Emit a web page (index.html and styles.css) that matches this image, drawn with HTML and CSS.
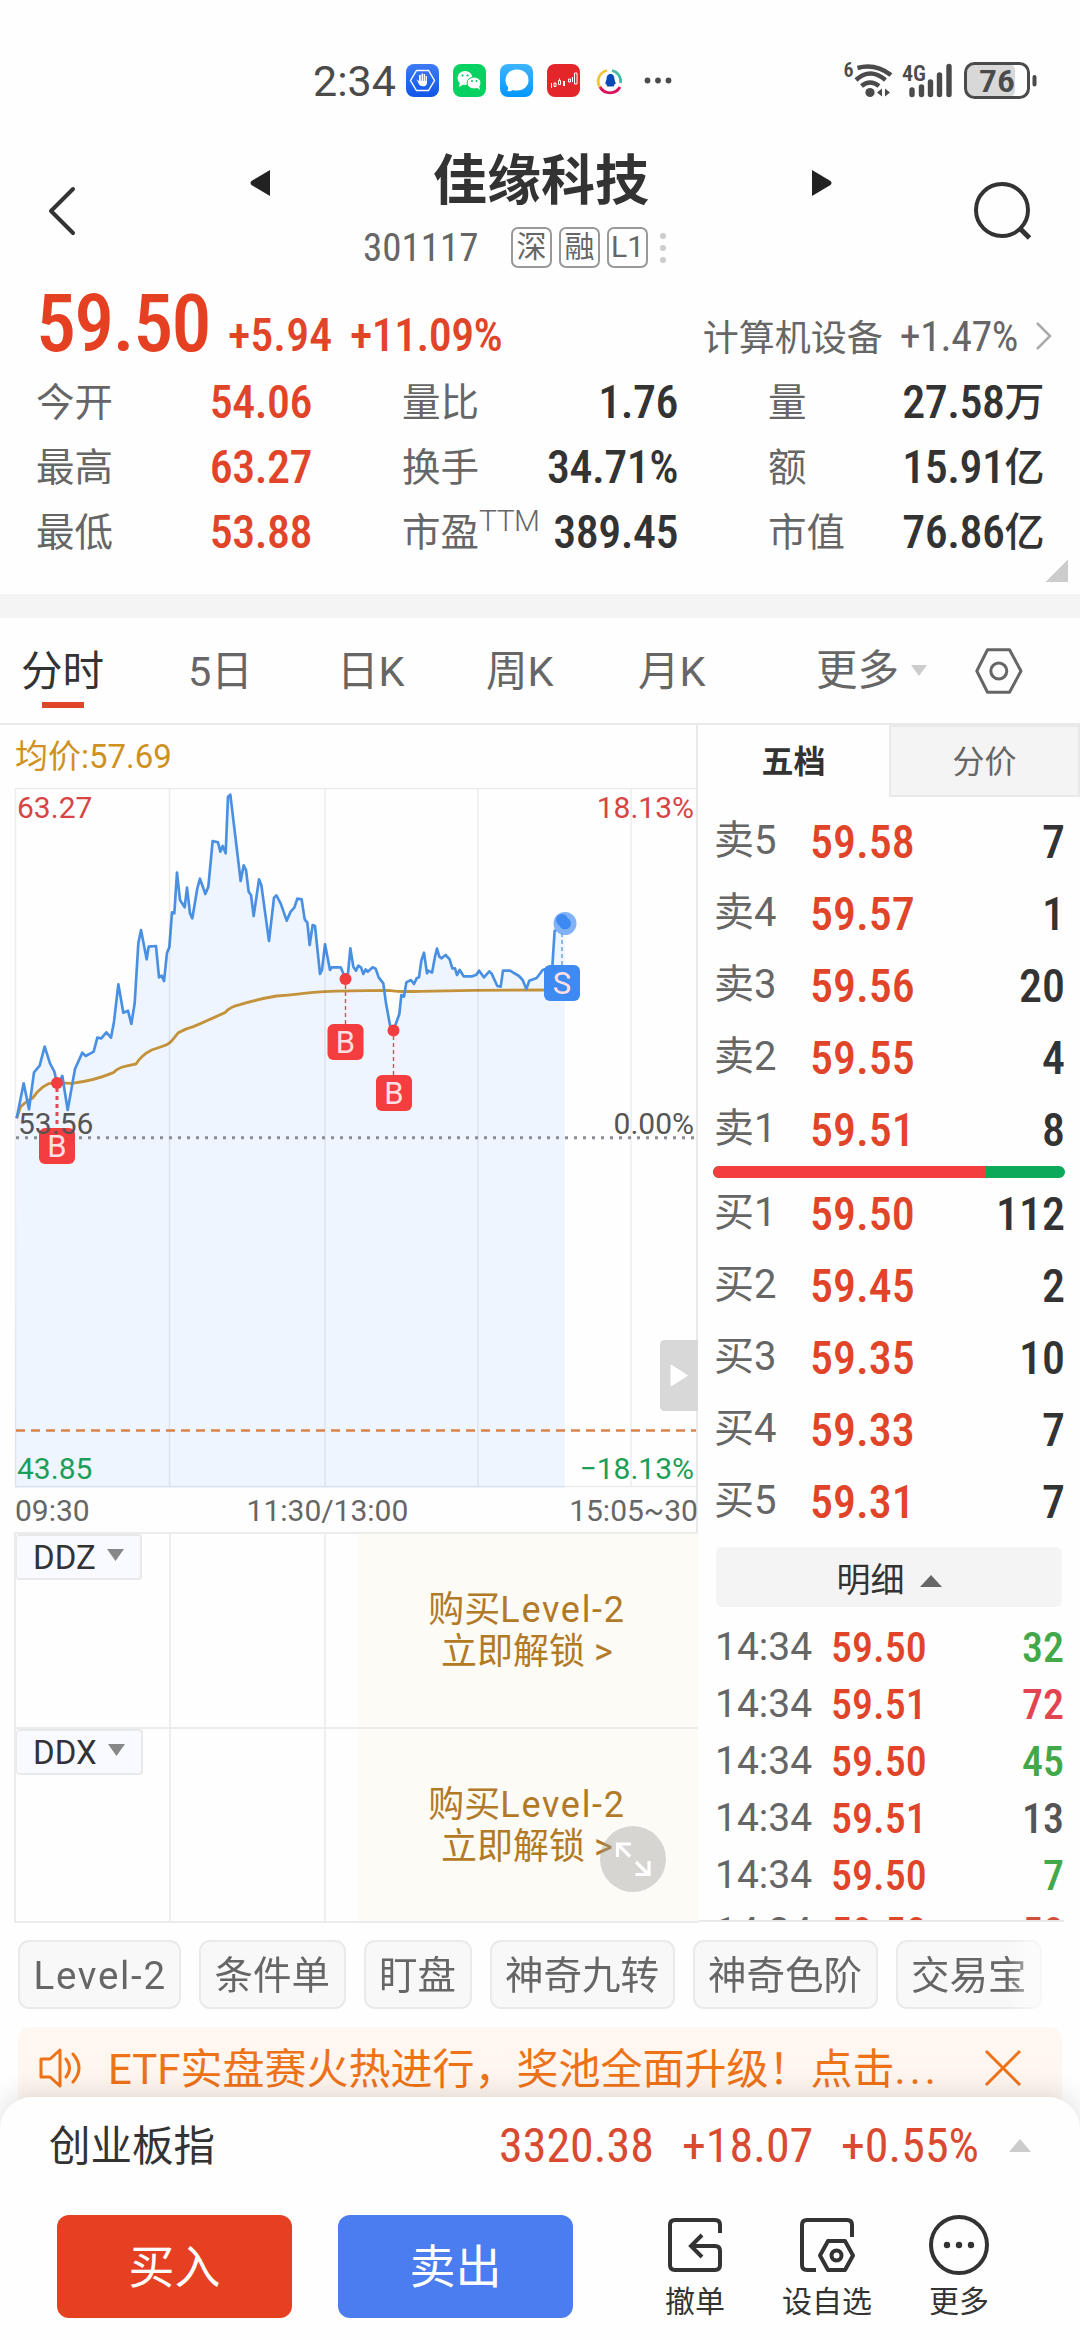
FILE: index.html
```html
<!DOCTYPE html>
<html lang="zh-CN">
<head>
<meta charset="utf-8">
<title>佳缘科技 301117</title>
<link rel="stylesheet" href="styles.css">
</head>
<body>
<div class="status">
  <span class="clock">2:34</span>
  <svg class="apps" width="270" height="40" viewBox="0 0 270 40">
    <defs>
      <linearGradient id="gBlue" x1="0" y1="0" x2="0" y2="1"><stop offset="0" stop-color="#3f7bf6"/><stop offset="1" stop-color="#0f55e8"/></linearGradient>
      <linearGradient id="gSky" x1="0" y1="0" x2="0" y2="1"><stop offset="0" stop-color="#3db5ff"/><stop offset="1" stop-color="#0497ff"/></linearGradient>
    </defs>
    <rect x="0" y="3" width="33" height="33" rx="8" fill="url(#gBlue)"/>
    <path d="M10.500 9.500h12l6 10-6 10h-12l-6-10z" fill="none" stroke="#fff" stroke-width="1.400"/>
    <path d="M13 14v6l-2.500-1.500 3 5.500q1.500 1.500 4.500 1.300 3-.3 3-4V15h-1.300v5h-.6v-7h-1.500v7h-.6v-7.500h-1.500V20h-.7v-6z" fill="#fff"/>
    <rect x="47" y="3" width="33" height="33" rx="8" fill="#07d160"/>
    <ellipse cx="59" cy="17" rx="7.500" ry="7" fill="#fff"/><path d="M54 21l-1 5 5-3z" fill="#fff"/>
    <ellipse cx="68" cy="22" rx="7" ry="6" fill="#fff" stroke="#07d160" stroke-width="1"/><path d="M70 26l4 3-1-5z" fill="#fff"/>
    <g fill="#07c160"><circle cx="56.500" cy="14.500" r="1.100"/><circle cx="61.500" cy="14.500" r="1.100"/><circle cx="66" cy="20" r="1"/><circle cx="70.500" cy="20" r="1"/></g>
    <rect x="94" y="3" width="33" height="33" rx="8" fill="url(#gSky)"/>
    <path d="M111 8.500c7 0 11.500 4.500 11.500 10.500S118 29.500 111 29.500c-1.500 0-3-.2-4-.6-2 1.300-4 1.400-6 1.100 1-1 1.500-2.500 1-4-1.700-1.800-2.500-4.300-2.500-7C99.500 13 104 8.500 111 8.500z" fill="#fff"/>
    <rect x="141" y="3" width="33" height="33" rx="8" fill="#e3262a"/>
    <g fill="none" stroke="#fff" stroke-width="1"><path d="M145.500 22v5M148 22h2v3.500h-2zM152.500 19.500h2v4h-2zM153.500 17.500v2M157.500 20v5M158.500 20v5M162.500 18h2v3h-2zM166.500 16v5M168.500 12h2.500v11h-2.500z"/></g>
    <g fill="none" stroke-width="2.800"><path d="M194.500 27A11 11 0 0 1 201 9.500" stroke="#f0c53a"/><path d="M206 9.500A11 11 0 0 1 214.500 22" stroke="#42bfa4"/><path d="M194 26A11.500 11.500 0 0 0 214 26" stroke="#d9145e"/></g>
    <path d="M204.500 13c3 0 4 2.500 4 5.500l1.300 4-1.300 1-.8 2h-6.400l-.8-2-1.300-1 1.300-4c0-3 1-5.500 4-5.500z" fill="#0a49b5"/>
    <g fill="#4b4b4b"><circle cx="241.500" cy="19.500" r="2.900"/><circle cx="252" cy="19.500" r="2.900"/><circle cx="262.500" cy="19.500" r="2.900"/></g>
  </svg>
  <svg class="signals" width="200" height="40" viewBox="842 61 200 40">
    <g fill="none" stroke="#4b4b4b" stroke-width="4.500">
      <path d="M856.500 68q17.500-5 33.500 7"/><path d="M855 80q14-13 29.500 0"/><path d="M860.500 86q8.500-7 17.500 0"/>
    </g>
    <circle cx="869" cy="92.500" r="4.600" fill="#4b4b4b"/>
    <path d="M881 88.500v8l-5-4zM884 88.500v8l5-4z" fill="#4b4b4b"/>
    <text x="842.500" y="77" font-size="20" class="mini">6</text>
    <text x="901" y="81" font-size="22" class="mini" textLength="24" lengthAdjust="spacingAndGlyphs">4G</text>
    <g stroke="#4b4b4b" stroke-width="5.400" stroke-linecap="round"><path d="M911 90v4.500M920.500 87v7.500M929.500 82v12.500M938.500 75v19.500M948 66.500v28"/></g>
    <rect x="965" y="64" width="49" height="33" rx="6" fill="#d8d8d8"/>
    <rect x="964.500" y="63.500" width="63" height="34" rx="9" fill="none" stroke="#4b4b4b" stroke-width="3"/>
    <path d="M1033.500 77v7.500" stroke="#4b4b4b" stroke-width="4" stroke-linecap="round"/>
    <text x="978" y="92" font-size="32" class="mini" textLength="36" lengthAdjust="spacingAndGlyphs">76</text>
  </svg>
</div>

<header class="titlebar">
  <svg class="back" width="30" height="52" viewBox="0 0 30 52"><path d="M26 4L4 26l22 22" fill="none" stroke="#333" stroke-width="4" stroke-linecap="round" stroke-linejoin="round"/></svg>
  <svg class="prev" width="24" height="30" viewBox="0 0 24 30"><path d="M22 2v26L3.500 17q-2-2 0-4z" fill="#222"/></svg>
  <div class="stock">
    <h1>佳缘科技</h1>
    <div class="code"><span class="num">301117</span><i>深</i><i>融</i><i>L1</i>
      <svg width="8" height="36" viewBox="0 0 8 36" fill="#ccc"><circle cx="4" cy="6" r="3"/><circle cx="4" cy="18" r="3"/><circle cx="4" cy="30" r="3"/></svg>
    </div>
  </div>
  <svg class="next" width="24" height="30" viewBox="0 0 24 30"><path d="M2 2v26l18.500-11q2-2 0-4z" fill="#222"/></svg>
  <svg class="search" width="64" height="64" viewBox="0 0 64 64"><circle cx="29" cy="30" r="26" fill="none" stroke="#333" stroke-width="4"/><path d="M46.500 48l10 10" stroke="#333" stroke-width="5"/></svg>
</header>

<section class="quote">
  <div class="headline">
    <span class="price num">59.50</span><span class="chg num">+5.94</span><span class="pct num">+11.09%</span>
    <span class="sector">计算机设备</span><span class="sectorpct num">+1.47%</span>
    <svg width="20" height="30" viewBox="0 0 20 30"><path d="M4 2l13 13L4 28" fill="none" stroke="#aaa" stroke-width="2.500"/></svg>
  </div>
  <div class="stats">
    <div><label>今开</label><b class="num up">54.06</b></div><div><label>量比</label><b class="num">1.76</b></div><div><label>量</label><b class="num">27.58<em>万</em></b></div>
    <div><label>最高</label><b class="num up">63.27</b></div><div><label>换手</label><b class="num">34.71%</b></div><div><label>额</label><b class="num">15.91<em>亿</em></b></div>
    <div><label>最低</label><b class="num up">53.88</b></div><div><label>市盈<sup>TTM</sup></label><b class="num">389.45</b></div><div><label>市值</label><b class="num">76.86<em>亿</em></b></div>
  </div>
  <span class="corner"></span>
</section>

<nav class="tabs">
  <span class="on">分时</span><span>5日</span><span>日K</span><span>周K</span><span>月K</span>
  <span class="more">更多<svg width="16" height="11" viewBox="0 0 16 11"><path d="M0 0h16L8 11z" fill="#ccc"/></svg></span>
  <svg width="48" height="46" viewBox="0 0 48 46" fill="none" stroke="#666" stroke-width="3" stroke-linejoin="round"><path d="M12.500 1.800h22L46 23 34.500 44.200h-22L1.800 23z"/><circle cx="23.800" cy="23" r="8"/></svg>
</nav>

<main class="market">
  <div class="left">
    <div class="avg">均价:57.69</div>
    <svg class="chart" width="698" height="700" viewBox="0 0 698 700">
      <g transform="translate(0 -18) scale(.33333)">
        <path class="area" d="M45 2166L50 1045L71 940L87 1018L102 907L119 887L134 830L150 880L163 905L172 945L187 918L203 1020L225 897L247 848L257 858L281 845L292 803L304 805L319 787L333 803L342 755L355 643L370 728L384 722L394 762L404 700L415 520L423 480L440 568L446 530L468 528L477 622L485 617L492 633L501 548L508 532L516 427L523 430L531 308L540 390L554 412L561 353L570 430L577 445L592 355L600 326L616 372L625 350L638 213L654 217L661 245L668 228L677 250L684 80L691 74L722 333L731 286L738 300L746 365L753 375L761 438L777 328L784 345L799 455L807 513L822 383L829 376L842 400L860 452L872 425L883 413L892 386L905 388L914 448L922 458L929 525L938 465L945 468L960 612L966 600L975 523L990 600L995 592L1022 592L1036 625L1044 610L1051 535L1060 590L1068 602L1075 587L1083 592L1090 612L1097 598L1103 605L1118 592L1127 596L1136 622L1150 640L1158 700L1170 765L1181 780L1198 732L1204 675L1212 680L1219 637L1233 630L1242 642L1250 625L1257 622L1264 572L1272 548L1281 610L1285 602L1296 608L1305 560L1311 536L1318 560L1325 565L1337 555L1349 568L1357 595L1365 595L1371 615L1379 600L1391 619L1417 619L1429 614L1437 602L1452 622L1468 604L1475 611L1492 648L1502 650L1509 602L1530 602L1557 618L1568 630L1579 657L1588 632L1610 624L1628 600L1657 590L1664 482L1676 478L1694 460L1694 2166z"/>
        <path class="avgline" d="M50 1045L62 1010Q90 985 97 985Q130 940 160 938L215 940Q280 933 340 908Q355 893 375 889L408 882Q425 855 455 840L490 828Q510 822 522 804L535 788Q560 775 580 770Q610 758 630 748L675 728Q690 710 720 704Q770 688 830 678Q900 672 940 667Q1000 662 1100 662L1165 661Q1200 666 1260 664L1420 661L1640 660"/>
        <path class="line" d="M50 1045L71 940L87 1018L102 907L119 887L134 830L150 880L163 905L172 945L187 918L203 1020L212 970L225 897L247 848L257 858L281 845L292 803L304 805L319 787L333 803L342 755L355 643L370 728L384 722L394 762L404 700L415 520L423 480L440 568L446 530L468 528L477 622L485 617L492 633L501 548L508 532L516 427L523 430L531 308L540 390L554 412L561 353L570 430L577 445L592 355L600 326L616 372L625 350L638 213L654 217L661 245L668 228L677 250L684 80L691 74L722 333L731 286L738 300L746 365L753 375L761 438L777 328L784 345L799 455L807 513L822 383L829 376L842 400L860 452L872 425L883 413L892 386L905 388L914 448L922 458L929 525L938 465L945 468L960 612L966 600L975 523L990 600L995 592L1022 592L1036 625L1044 610L1051 535L1060 590L1068 602L1075 587L1083 592L1090 612L1097 598L1103 605L1118 592L1127 596L1136 622L1150 640L1158 700L1170 765L1181 780L1198 732L1204 675L1212 680L1219 637L1233 630L1242 642L1250 625L1257 622L1264 572L1272 548L1281 610L1285 602L1296 608L1305 560L1311 536L1318 560L1325 565L1337 555L1349 568L1357 595L1365 595L1371 615L1379 600L1391 619L1417 619L1429 614L1437 602L1452 622L1468 604L1475 611L1492 648L1502 650L1509 602L1530 602L1557 618L1568 630L1579 657L1588 632L1610 624L1628 600L1640 596L1657 590L1664 482L1676 478L1690 460"/>
      </g>
      <path class="grid" d="M15 .5H696M15.500 0V699M169.500 0V699M325 0V699M478 0V699M631 0V699M15 698.500H696"/>
      <path d="M16 349.700H696" stroke="#8a8e94" stroke-width="3" stroke-dasharray="3 6"/>
      <path d="M16 642.500H696" stroke="#d9824a" stroke-width="2.500" stroke-dasharray="9 6"/>
      <g stroke="#e04a55" fill="none"><path d="M57 300v46" stroke-width="3" stroke-dasharray="4 4"/><path d="M345.500 197v40M393.500 248v41" stroke-width="1.400" stroke-dasharray="4 3"/></g>
      <circle cx="565" cy="135.500" r="11.500" fill="#82b2f5"/><path d="M558 143l4-3" stroke="#82b2f5" stroke-width="2"/><circle cx="562" cy="132" r="6" fill="#3d8bf2"/><circle cx="565" cy="135.500" r="6" fill="#3d8bf2"/>
      <path d="M562 145v32" stroke="#6fa3e0" stroke-width="1.500" stroke-dasharray="4 3"/>
      <g fill="#f33d3e"><circle cx="57" cy="295" r="6"/><circle cx="345.500" cy="191" r="6"/><circle cx="393.500" cy="242.500" r="6"/>
      <rect x="39" y="340" width="36" height="36" rx="6"/><rect x="327.500" y="236" width="36" height="36" rx="6"/><rect x="376" y="287" width="36" height="36" rx="6"/></g>
      <rect x="544" y="177" width="36" height="36" rx="6" fill="#3d8bf2"/>
      <g class="badge"><text x="57" y="369">B</text><text x="345.500" y="265">B</text><text x="394" y="316">B</text><text x="562" y="206">S</text></g>
      <g class="scale"><text x="17" y="30" fill="#d64545">63.27</text><text x="694" y="30" fill="#d64545" text-anchor="end">18.13%</text>
      <text x="18" y="346" fill="#555">53.56</text><text x="694" y="346" fill="#555" text-anchor="end">0.00%</text>
      <text x="17" y="691" fill="#1c9e58">43.85</text><text x="694" y="691" fill="#1c9e58" text-anchor="end">−18.13%</text></g>
      <path d="M698 552h-33q-5 0-5 5v61q0 5 5 5h33z" fill="#d8d8d8"/><path d="M671 577l16.500 10.500L671 598z" fill="#fff" stroke="#fff" stroke-linejoin="round"/>
    </svg>
    <div class="axis"><span>09:30</span><span>11:30/13:00</span><span>15:05~30</span></div>
    <div class="panel"><span class="ind">DDZ<svg width="18" height="12" viewBox="0 0 18 12"><path d="M0 0h17L8.500 12z" fill="#888"/></svg></span><p>购买<span>Level-2</span><br>立即解锁 &gt;</p></div>
    <div class="panel"><span class="ind">DDX<svg width="18" height="12" viewBox="0 0 18 12"><path d="M0 0h17L8.500 12z" fill="#888"/></svg></span><p>购买<span>Level-2</span><br>立即解锁 &gt;</p>
      <svg class="full" width="66" height="66" viewBox="0 0 66 66"><circle cx="33" cy="33" r="33" fill="#999" fill-opacity=".38"/><path d="M17.500 31V18H31M18 18.500L30 30.500M36 36L48 48M49 35v13.500H35.500" fill="none" stroke="#fff" stroke-width="3.200"/></svg>
    </div>
  </div>
  <aside class="book">
    <div class="booktabs"><b>五档</b><span>分价</span></div>
    <div class="rows">
      <div><label>卖5</label><b class="num">59.58</b><u class="num">7</u></div>
      <div><label>卖4</label><b class="num">59.57</b><u class="num">1</u></div>
      <div><label>卖3</label><b class="num">59.56</b><u class="num">20</u></div>
      <div><label>卖2</label><b class="num">59.55</b><u class="num">4</u></div>
      <div><label>卖1</label><b class="num">59.51</b><u class="num">8</u></div>
    </div>
    <div class="ratio"><span></span></div>
    <div class="rows">
      <div><label>买1</label><b class="num">59.50</b><u class="num">112</u></div>
      <div><label>买2</label><b class="num">59.45</b><u class="num">2</u></div>
      <div><label>买3</label><b class="num">59.35</b><u class="num">10</u></div>
      <div><label>买4</label><b class="num">59.33</b><u class="num">7</u></div>
      <div><label>买5</label><b class="num">59.31</b><u class="num">7</u></div>
    </div>
    <div class="detail">明细<svg width="22" height="12" viewBox="0 0 22 12"><path d="M11 0l11 12H0z" fill="#666"/></svg></div>
    <div class="ticks">
      <div><span>14:34</span><b class="num">59.50</b><u class="num buy">32</u></div>
      <div><span>14:34</span><b class="num">59.51</b><u class="num sell">72</u></div>
      <div><span>14:34</span><b class="num">59.50</b><u class="num buy">45</u></div>
      <div><span>14:34</span><b class="num">59.51</b><u class="num">13</u></div>
      <div><span>14:34</span><b class="num">59.50</b><u class="num buy">7</u></div>
      <div><span>14:34</span><b class="num">59.50</b><u class="num late">50</u></div>
    </div>
  </aside>
</main>

<div class="chips"><span class="latin">Level-2</span><span>条件单</span><span>盯盘</span><span>神奇九转</span><span>神奇色阶</span><span>交易宝</span></div>

<div class="notice">
  <svg width="46" height="44" viewBox="0 0 46 44" fill="none" stroke="#ee7218" stroke-width="3" stroke-linejoin="round"><path d="M3 13h9L22 4v36l-10-9H3z"/><path d="M28 13q7 9 0 18M35 8q12 14 0 28" stroke-linecap="round"/></svg>
  <p>ETF实盘赛火热进行，奖池全面升级！点击<span>...</span></p>
  <svg class="close" width="38" height="38" viewBox="0 0 38 38"><path d="M2 2l34 34M36 2L2 36" stroke="#ee7218" stroke-width="3"/></svg>
</div>

<footer class="sheet">
  <div class="index"><span>创业板指</span><b class="num v1">3320.38</b><b class="num v2">+18.07</b><b class="num v3">+0.55%</b><svg width="22" height="13" viewBox="0 0 22 13"><path d="M11 0l11 13H0z" fill="#ccc"/></svg></div>
  <div class="actions">
    <button class="bbuy">买入</button><button class="bsell">卖出</button>
    <div class="act"><svg width="60" height="60" viewBox="0 0 60 60" fill="none" stroke="#333" stroke-width="4"><path d="M55 18V10q0-5-5-5H10q-5 0-5 5v40q0 5 5 5h40q5 0 5-5V36q0-5-5-5H26"/><path d="M37 20L26 31l11 11"/></svg>撤单</div>
    <div class="act wide"><svg width="60" height="60" viewBox="0 0 60 60" fill="none" stroke="#333" stroke-width="4" stroke-linejoin="round"><path d="M55 22V10q0-5-5-5H10q-5 0-5 5v40q0 5 5 5h9"/><path d="M31 26h17l8 14.500L48 55H31l-8-14.500z"/><circle cx="39.500" cy="40.500" r="5"/></svg>设自选</div>
    <div class="act"><svg width="60" height="60" viewBox="0 0 60 60"><circle cx="30" cy="30" r="28" fill="none" stroke="#333" stroke-width="4"/><g fill="#333"><circle cx="18" cy="30" r="3.200"/><circle cx="30" cy="30" r="3.200"/><circle cx="42" cy="30" r="3.200"/></g></svg>更多</div>
  </div>
</footer>
</body>
</html>
```
FILE: styles.css
```css
* { box-sizing: border-box; margin: 0; padding: 0; }
body { width: 1080px; height: 2340px; overflow: hidden; background: #fefefe; color: #333; font-family: Roboto, "Noto Sans CJK SC", sans-serif; }
svg { display: block; flex: none; }
i, em, u { font-style: normal; text-decoration: none; }
.num { font-stretch: 80%; font-weight: 500; }

.status { height: 101px; padding: 61px 0 0 313px; display: flex; }
.clock { width: 93px; font-size: 43px; line-height: 40px; color: #4b4b4b; white-space: nowrap; }
.signals { margin-left: 167px; overflow: visible; }
.mini { font-weight: 600; fill: #4b4b4b; font-stretch: 80%; }

.titlebar { height: 189px; padding-top: 29px; display: flex; align-items: flex-start; }
.back { margin: 55px 0 0 47px; }
.prev { margin: 38px 0 0 171px; }
.stock { width: 538px; padding-top: 20px; display: flex; flex-direction: column; align-items: center; gap: 13px; }
.stock h1 { font-size: 54px; line-height: 64px; font-weight: 700; color: #333; }
.code { height: 41px; display: flex; align-items: center; gap: 7px; margin-left: -44px; padding-left: 135px; align-self: flex-start; }
.code .num { width: 141px; font-size: 39px; font-weight: 400; color: #666; }
.code i { width: 41px; height: 41px; border: 2px solid #999; border-radius: 7px; font-size: 30px; line-height: 36px; text-align: center; color: #666; }
.code svg { margin-left: 4px; }
.next { margin: 38px 0 0 0; }
.search { margin: 50px 0 0 139px; }

.quote { height: 328px; border-bottom: 24px solid #f4f4f4; position: relative; }
.headline { height: 79px; padding: 0 27px 0 36px; display: flex; align-items: baseline; }
.price { width: 192px; font-size: 80px; line-height: 68px; font-stretch: 75%; font-weight: 550; letter-spacing: -1.700px; color: #e64023; }
.chg { width: 122px; font-size: 46px; color: #e0452a; }
.pct { font-size: 46px; font-stretch: 77%; letter-spacing: -.6px; color: #e0452a; }
.sector { margin-left: auto; font-size: 36px; line-height: 40px; color: #666; }
.sectorpct { margin: 0 15px 0 17px; font-size: 42px; font-stretch: 78%; font-weight: 450; letter-spacing: -.4px; color: #666; }
.stats { padding: 0 35px 0 36px; display: grid; grid-template-columns: repeat(3, 276px); column-gap: 90px; grid-auto-rows: 65px; }
.stats div { display: flex; justify-content: space-between; font-size: 38.500px; line-height: 67px; white-space: nowrap; }
.stats label { color: #666; }
.stats sup { font-size: 30px; line-height: 20px; vertical-align: 15px; font-weight: 300; letter-spacing: -.5px; }
.stats b { font-size: 46px; line-height: 67px; font-stretch: 77%; font-weight: 520; letter-spacing: -.5px; }
.stats em { font-size: 40px; font-weight: 500; position: relative; top: -2px; }
.stats .up { color: #e0452a; }
.corner { position: absolute; right: 12px; top: 270px; width: 23px; height: 22px; background: linear-gradient(135deg, transparent 50%, #ccc 50%); }

.tabs { height: 107px; padding-left: 21px; border-bottom: 2px solid #e9e9e9; display: grid; grid-template-columns: 167px 149px 149px 152px 178px 159px auto; align-items: center; font-size: 41.500px; line-height: 107px; color: #666; }
.tabs span { height: 105px; }
.tabs .on { color: #333; background: linear-gradient(#e0452a, #e0452a) 21px 84px / 42px 6px no-repeat; }
.more { display: flex; align-items: center; gap: 12px; }

.market { height: 1198px; display: grid; grid-template-columns: 698px 382px; }
.left { border-right: 2px solid #e9e9e9; display: grid; grid-template-rows: 63px 700px 44px 195px 195px; min-width: 0; }
.avg { padding-left: 15px; font-size: 33px; line-height: 64px; color: #cf9121; }
.chart { overflow: hidden; width: 698px; }
.area { fill: #eef5fe; }
.line { fill: none; stroke: #4a90e2; stroke-width: 8; stroke-linejoin: round; }
.avgline { fill: none; stroke: #c3923a; stroke-width: 8.500; }
.grid { fill: none; stroke: #000; stroke-opacity: .07; stroke-width: 1.500; }
.scale { font-size: 30px; }
.badge { font-size: 31px; fill: #ffdfe2; text-anchor: middle; }
.axis { display: flex; justify-content: space-between; padding-left: 15px; font-size: 30px; line-height: 46px; color: #666; }
.axis span:nth-child(2) { margin-right: 4px; }
.panel { margin-left: 14px; border: 1px solid #ececec; border-width: 2px 0 0 2px; position: relative; display: flex; justify-content: space-between; align-items: flex-start; background: linear-gradient(#eee, #eee) 153px 0 / 2px 100% no-repeat, linear-gradient(#eee, #eee) 308px 0 / 2px 100% no-repeat; }
.panel:last-child { border-bottom: 2px solid #ececec; height: 196px; }
.ind { height: 46px; padding: 0 15px 0 16px; display: flex; align-items: center; gap: 11px; border: 2px solid #e9e9e9; border-left-width: 1px; border-radius: 4px; background: #f8faff; font-size: 33px; color: #333; }
.ind svg { margin-top: -4px; }
.panel p { width: 340px; height: 100%; padding: 55px 2px 0 0; text-align: center; background: #fcfbf6; font-size: 36px; line-height: 42px; color: #b27a26; }
.panel p span { letter-spacing: 1.700px; }
.full { position: absolute; left: 584px; top: 97px; }

.booktabs { display: grid; grid-template-columns: 191px 191px; height: 81px; }
.booktabs > * { height: 72px; line-height: 74px; text-align: center; font-size: 32px; }
.booktabs span { border: 2px solid #e9e9e9; background: #f4f4f4; color: #666; line-height: 70px; }
.rows div { height: 72px; padding: 0 15px 0 16px; display: grid; grid-template-columns: 96px 1fr auto; align-items: center; }
.rows label { font-size: 40px; line-height: 69px; height: 72px; color: #666; }
.rows b { font-size: 46px; font-weight: 550; color: #e0452a; }
.rows u { font-size: 46px; font-weight: 550; }
.ratio { width: 352px; height: 12px; margin: 0 0 0 15px; border-radius: 6px; overflow: hidden; background: #0da95b; }
.ratio span { display: block; width: 273px; height: 12px; background: #f33d3e; }
.detail { width: 346px; height: 60px; margin: 9px 0 0 18px; border-radius: 6px; background: #f4f4f4; display: flex; align-items: center; justify-content: center; gap: 15px; font-size: 34px; }
.detail svg { margin-top: 8px; }
.ticks { width: 366px; height: 315px; padding: 12px 0 0 17px; overflow: hidden; border-bottom: 2px solid #e9e9e9; }
.ticks div { height: 57px; display: grid; grid-template-columns: 116px 1fr auto; align-items: center; line-height: 57px; }
.ticks span { font-size: 39px; color: #666; }
.ticks b { font-size: 42px; color: #e0452a; }
.ticks u { font-size: 42px; color: #555; }
.ticks .buy { color: #43a84a; }
.ticks .sell { color: #e2454f; }
.ticks .late { color: #d2503a; }

.chips { width: 1062px; height: 104px; padding: 17px 0 0 18px; display: flex; gap: 18px; overflow: hidden; -webkit-mask-image: linear-gradient(90deg, #000 1006px, rgba(0,0,0,.2) 1046px); mask-image: linear-gradient(90deg, #000 1006px, rgba(0,0,0,.2) 1046px); }
.chips span { flex: none; height: 69px; padding: 0 13.500px; border: 2px solid #eaeaea; border-radius: 11px; background: #f8f8f8; font-size: 38.500px; line-height: 67px; color: #666; white-space: nowrap; }
.chips .latin { width: 163px; letter-spacing: 1.700px; }

.notice { width: 1044px; height: 100px; margin-left: 18px; padding: 0 0 18px 20px; border-radius: 12px; background: linear-gradient(#fff7f1, #fff5ee); display: flex; align-items: center; color: #ee7218; }
.notice p { width: 876px; margin-left: 24px; margin-top: -6px; font-size: 42px; white-space: nowrap; }
.notice p span { letter-spacing: 4px; }

.sheet { height: 243px; margin-top: -30px; position: relative; border-radius: 32px 32px 0 0; background: #fefefe; box-shadow: 0 -4px 26px rgba(0,0,0,.12); }
.index { height: 97px; padding: 0 49px; display: flex; align-items: center; font-size: 41.500px; }
.index span { width: 450px; margin-top: -6px; }
.index .num { font-size: 48px; font-weight: 450; font-stretch: 79%; color: #d94a30; }
.index .v1 { width: 183px; }
.index .v2 { width: 159px; }
.index .v3 { width: 138px; }
.index svg { margin: 0 0 0 auto; }
.actions { padding: 21px 0 0 57px; display: flex; align-items: flex-start; }
button { width: 235px; height: 103px; padding-bottom: 7px; border: 0; border-radius: 12px; font: 46px Roboto, "Noto Sans CJK SC", sans-serif; color: #fff; }
.bbuy { background: #e64023; }
.bsell { background: #4b7cf0; margin-left: 46px; }
.act { width: 92px; margin-left: 76px; display: flex; flex-direction: column; align-items: center; gap: 9px; font-size: 30px; line-height: 36px; white-space: nowrap; }
.act.wide { margin: 0 40px; }
.act.wide + .act { margin-left: 0; }
```
